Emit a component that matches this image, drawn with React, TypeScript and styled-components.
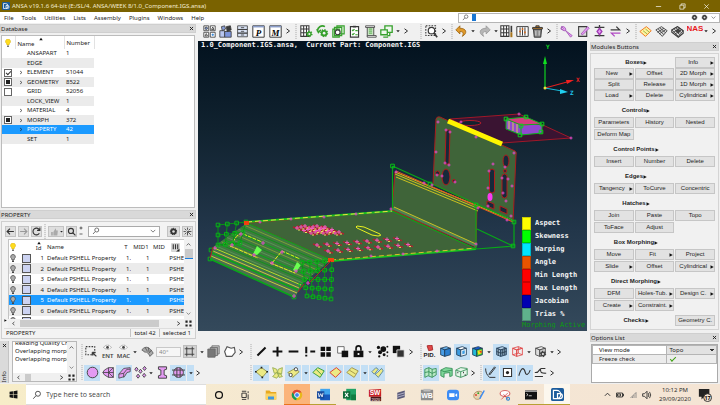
import React from 'react';
import styled, { createGlobalStyle, css } from 'styled-components';

const ui = `"Noto Sans", "Open Sans", sans-serif`;
const arial = `"Liberation Sans", Arial, sans-serif`;
const mono = `"DejaVu Sans Mono", monospace`;

const Global = createGlobalStyle`
  * { box-sizing: border-box; }
  body { margin: 0; background: #f0f0f0; font: 6px/8px ${ui}; color: #222; overflow: hidden; }
  button, input, select { font: inherit; color: inherit; margin: 0; padding: 0; border: 0; background: none; border-radius: 0; }
  svg { display: block; }
`;

/* ---------- layout ---------- */
const Page = styled.div`display: flex; flex-direction: column; height: 100vh;`;
const TitleBar = styled.header`
  display: flex; align-items: center; gap: 2px; height: 12px; flex: none; padding: 0 10px 0 2px;
  background: #7a6200; color: #f3ecd2;
`;
const WindowButtons = styled.div`display: flex; gap: 17px; margin-left: auto;`;
const MenuBar = styled.nav`display: flex; align-items: center; height: 11px; flex: none; background: #fff; padding-left: 4px; gap: 8px;`;
const MenuLink = styled.a`color: #222; text-decoration: none; line-height: 10px;`;
const MenuSearch = styled.label`
  display: flex; align-items: center; gap: 3px; width: 262px; height: 10px; margin-left: auto; padding: 0 3px 0 3px;
  border: 1px solid #b5b5b5; background: #fff;
`;
const MenuInput = styled.input`flex: 1; min-width: 0; height: 7px; border-left: 4px solid #1976d2; outline: none;`;
const Body = styled.div`
  flex: 1; min-height: 0; display: grid;
  grid-template: 'left tools tools' 18px 'left canvas right' 1fr 'bottom bottom right' 44px / 198px 1fr 132px;
`;
const LeftDock = styled.aside`grid-area: left; display: flex; flex-direction: column; padding: 1px 2px 1px 0; gap: 2px; min-height: 0;`;
const RightDock = styled.aside`grid-area: right; display: flex; flex-direction: column; gap: 2px; padding: 1px 1px 1px 2px; min-height: 0;`;
const DockTitle = styled.h2`
  display: flex; justify-content: space-between; align-items: center; margin: 0; padding: 0 2px 0 1px; height: 9px; flex: none;
  font-size: 6px; font-weight: 400; background: #d9d9d9; color: #222; box-shadow: 0 0 0 1px #cfcfcf inset;
`;
const CloseButton = styled.button`width: 5px; height: 5px;`;

/* ---------- toolbars ---------- */
const TopTools = styled.div`grid-area: tools; display: flex; align-items: center; padding: 0 3px 2px 4px; gap: 4px;`;
const ToolGroup = styled.div<{ $w: number; $lead?: number }>`
  display: flex; align-items: center; justify-content: space-between;
  flex: ${p => p.$w} 1 ${p => p.$w}px; min-width: 0; margin-left: ${p => p.$lead ?? 0}px;
`;
const Handle = styled.span`width: 2px; height: 15px; background: repeating-linear-gradient(#cfcfcf 0 1px, #ececec 1px 2px); flex: none;`;
const ToolButton = styled.button<{ $on?: boolean; $grey?: boolean; $narrow?: boolean }>`
  display: grid; place-items: center; flex: none; height: 16px; width: ${p => (p.$narrow ? 6 : 14)}px;
  ${p => p.$on && css`background: #c3dff5; width: ${p.$narrow ? 7 : 16}px;`}
  ${p => p.$grey && css`background: #d2d2d2; height: 13px; border: 1px solid #bdbdbd;`}
`;
const Bottom = styled.section`grid-area: bottom; display: flex; gap: 4px; padding: 1px 0 1px 0;`;
const InfoTab = styled.div`
  display: flex; flex-direction: column; align-items: center; justify-content: space-between; width: 9px; padding: 2px 0 1px;
  background: #dadada; border-right: 1px solid #c4c4c4;
`;
const VerticalText = styled.span`writing-mode: vertical-rl; transform: rotate(180deg);`;
const LogBox = styled.div`
  display: grid; grid-template: 1fr 8px / 1fr 9px; width: 65px; flex: none; margin: 0 0 1px -1px; background: #fff; border: 1px solid #b8b8b8;
`;
const LogLines = styled.div`overflow: hidden; padding-left: 2px; white-space: nowrap; height: 30px; display: flex; flex-direction: column; justify-content: flex-end; padding-bottom: 9px; line-height: 8px;`;
const ToolRows = styled.div`flex: 1; display: grid; grid-template-rows: 1fr 1fr; min-width: 0;`;
const ToolRow = styled.div`display: flex; align-items: center; padding-right: 26px; gap: 6px;`;
const Block = styled.div<{ $w: number }>`flex: ${p => p.$w} 1 ${p => p.$w}px; min-width: 0; display: flex; align-items: center; gap: 1px;`;
const Spin = styled.input`width: 25px; height: 10px; border: 1px solid #c8c8c8; background: #f6f6f6; color: #888; padding-left: 2px;`;
const Stack = styled.span`font-size: 6px; line-height: 6px; font-weight: 600; color: #444; display: grid; justify-items: center;`;

/* ---------- tables ---------- */
const Box = styled.div<{ $grow?: number }>`
  background: #fff; border: 1px solid #bcbcbc; margin: 0 1px; min-height: 0; overflow: hidden; flex: ${p => p.$grow ?? 0} 1 auto;
`;
const DataTable = styled.table`
  border-collapse: collapse; table-layout: fixed; width: 92px;
  th { font-weight: 400; text-align: left; height: 13px; padding: 0 0 0 2px; border-right: 1px solid #e2e2e2; }
  td { padding: 0 0 0 2px; white-space: nowrap; line-height: 9px; }
`;
const SortHead = styled.span`display: grid; line-height: 8px; svg { margin: 0 auto -1px; }`;
const DataRow = styled.tr<{ $on?: boolean }>`
  height: 9px;
  &:nth-child(even) { background: #ebebeb; height: 10px; }
  && { ${p => p.$on && css`background: #1b9aff; color: #fff;`} }
`;
const Tick = styled.input`
  appearance: none; display: block; width: 8px; height: 8px; border: 1px solid #666; background: #fff;
  &:checked::after { content: ''; display: block; width: 4px; height: 2px; margin: 1px; border: solid #333; border-width: 0 0 1px 1px; transform: rotate(-45deg); }
  &:indeterminate { background: #222; box-shadow: 0 0 0 1px #fff inset; }
`;
const NameCell = styled.span`display: flex; align-items: center; gap: 4px; padding-left: 2px; svg { width: 4px; height: 5px; }`;
const Blank = styled.i`width: 4px;`;

const PropPanel = styled.div`
  flex: none; display: flex; flex-direction: column; border: 1px solid #cfcfcf; background: #f3f3f3; margin-left: 1px; padding: 3px 2px 1px;
`;
const PropTools = styled.div`display: flex; align-items: center; gap: 2px; height: 14px; flex: none; padding: 0 0 2px 1px;`;
const SmallButton = styled.button<{ $flat?: boolean; $w?: number }>`
  display: grid; grid-auto-flow: column; place-items: center; width: ${p => p.$w ?? 11}px; height: 11px; flex: none;
  background: ${p => (p.$flat ? 'transparent' : '#dedede')}; border: 1px solid ${p => (p.$flat ? 'transparent' : '#c2c2c2')};
`;
const PlusMinus = styled.span`display: grid; gap: 2px; width: 5px; flex: none;`;
const Combo = styled.label`
  flex: 1 1 0; min-width: 0; display: flex; align-items: center; justify-content: space-between; height: 11px; margin: 0 5px 0 2px; padding: 0 3px;
  background: #fff; border: 1px solid #aaa;
`;
const ComboInput = styled.input`flex: 1 1 0; width: 0; min-width: 0; outline: none;`;
const PropGrid = styled.div`
  display: grid; grid-template: 80px 9px / 4px minmax(0, 1fr) 9px; flex: none; align-items: stretch;
`;
const PropScroll = styled.div`grid-column: 2; overflow: hidden; background: #fff; border: 1px solid #c4c4c4; border-width: 1px 0 0 1px;`;
const PropTable = styled.table`
  border-collapse: collapse; table-layout: fixed; width: 100%;
  th { font-weight: 400; height: 13px; padding: 0; text-align: center; }
  td { padding: 0; white-space: nowrap; overflow: hidden; text-align: right; line-height: 10px; }
  th:nth-child(4), td:nth-child(4) { text-align: left; padding-left: 3px; }
`;
const PropRow = styled(DataRow)`&&, &&:nth-child(even) { height: 10px; } &&:nth-child(even) { height: 11px; }`;
const Swatch = styled.span`display: block; width: 9px; height: 9px; margin-left: 1px; border: 1px solid #555; background: #ccd3f2;`;
const VBar = styled.div`background: #f0f0f0; display: flex; flex-direction: column; align-items: center; justify-content: space-between; padding: 3px 0;`;
const Corner = styled.div`display: grid; place-items: center; background: #f0f0f0;`;
const VThumb = styled.i`width: 8px; height: 10px; background: #c9c9c9; border-bottom: 1px solid #1b7fe0; margin-bottom: auto; margin-top: 2px;`;
const HBar = styled.div`background: #f0f0f0; display: flex; align-items: center; justify-content: space-between; padding: 0 3px; min-width: 0;`;
const HThumb = styled.i<{ $w: number }>`width: ${p => p.$w}%; height: 7px; background: #cbcbcb; margin: 0 auto 0 4px;`;
const StatusBar = styled.div`display: flex; justify-content: flex-end; gap: 3px; line-height: 8px; height: 9px; border-top: 1px solid #ddd; padding: 0 2px;`;
const StatusCell = styled.span<{ $grow?: boolean }>`${p => (p.$grow ? 'flex: 1;' : 'border-left: 1px solid #c4c4c4; padding-left: 3px;')}`;

/* ---------- module buttons ---------- */
const Modules = styled.div`
  flex: 1; min-height: 0; overflow: hidden; display: flex; flex-direction: column; gap: 4px; padding: 3px 3px 0; border: 1px solid #d4d4d4; margin-bottom: 1px;
  background: #f1f1f1; font-family: ${arial};
`;
const ModuleGroup = styled.section<{ $tight?: boolean }>`
  display: grid; grid-template-columns: repeat(3, 1fr); grid-auto-rows: 11px; gap: ${p => (p.$tight ? 0 : 1)}px 1px;
`;
const ModuleTitle = styled.h3<{ $wide?: boolean }>`
  grid-column: 1 / ${p => (p.$wide ? 3 : 4)}; margin: 0; padding-left: 4px; padding-right: ${p => (p.$wide ? 0 : 41)}px;
  display: flex; align-items: center; justify-content: center; font-size: 6px; font-weight: 700; line-height: 11px; white-space: nowrap;
`;
const ModuleButton = styled.button`
  display: flex; align-items: center; justify-content: center; min-width: 0; overflow: hidden; white-space: nowrap; line-height: 9px;
  background: #e2e2e2; border: 1px solid #c6c6c6;
`;
const ModuleLabel = styled.span<{ $arrow?: boolean }>`flex: ${p => (p.$arrow ? '1' : 'none')}; text-align: center;`;

const Options = styled.table`
  border-collapse: collapse; table-layout: fixed; width: 100%; border: 1px solid #aaa;
  th, td { font-weight: 400; text-align: left; border: 1px solid #b5b5b5; height: 9px; padding: 0 0 0 6px; line-height: 8px; }
  td { padding: 0 2px; width: 40%; background: #e2e2e2; }
  tr + tr > * { background: #ececec; }
`;
const OptionsBox = styled.div`flex: none; height: 39px; background: #fff; border: 1px solid #aaa; margin: 0 1px;`;
const OptionSelect = styled.select`width: 100%; height: 8px; appearance: none; display: block; background: linear-gradient(#333, #333) 100% 3px / 4px 1px no-repeat, linear-gradient(#333, #333) calc(100% - 1px) 4px / 2px 1px no-repeat;`;
const GreenTick = styled.input`
  appearance: none; display: block; width: 6px; height: 3px; margin: 0 0 1px 1px;
  &:checked { border: solid #3ca010; border-width: 0 0 1px 1px; transform: rotate(-45deg); }
`;

/* ---------- viewport ---------- */
const Canvas = styled.main`
  grid-area: canvas; position: relative; overflow: hidden; margin: 0 1px 9px 0;
  background: linear-gradient(#03121f, #10222f 30%, #22364a 65%, #34495b);
  color: #f4f4f4; font: 700 7px/9px ${mono};
`;
const Scene = styled.svg`width: 100%; height: 100%;`;
const SceneTitle = styled.h1`position: absolute; left: 3px; top: 0; margin: 0; font: inherit; white-space: pre;`;
const Legend = styled.ul`position: absolute; right: 2px; bottom: 1px; width: 63px; margin: 0; padding: 0; list-style: none;`;
const LegendItem = styled.li<{ $c: string }>`
  display: flex; align-items: center; gap: 4px; height: 13px; white-space: nowrap;
  &::before { content: ''; width: 7px; height: 11px; background: ${p => p.$c}; border: 1px solid #0003; }
`;
const MorphNote = styled.li`color: #0b9a12; font-weight: 400; white-space: nowrap;`;

/* ---------- taskbar ---------- */
const Taskbar = styled.footer`
  display: flex; align-items: stretch; height: 21px; flex: none; font-family: "Open Sans", sans-serif;
  background: linear-gradient(90deg, #f7edc8, #f5e8d4 45%, #f4e4d4);
`;
const Start = styled.button`width: 26px; display: grid; place-items: center;`;
const TaskSearch = styled.label`display: flex; align-items: center; gap: 4px; width: 180px; padding-left: 6px; background: #fff; border: 1px solid #ddd; border-width: 1px 0;`;
const TaskInput = styled.input`flex: 1; font-size: 7px; outline: none; &::placeholder { color: #444; opacity: 1; }`;
const TaskButton = styled.button<{ $bg?: string; $line?: string }>`
  display: grid; place-items: center; width: 26px; flex: 0 1 26px; background: ${p => p.$bg ?? 'transparent'};
  box-shadow: inset 0 -1px ${p => p.$line ?? 'transparent'};
`;
const Tray = styled.div`display: flex; align-items: center; gap: 5px; margin-left: auto; padding-right: 8px;`;
const Clock = styled.time`text-align: center; line-height: 9px; width: 36px; white-space: nowrap;`;

/* ---------- icons ---------- */
const G = '#36a02c', K = '#3a3a3a', P = '#e49af2', Y = '#ecea84';

const cube = (top: string, left: string, right: string, line = '#1d3a55') => (
  <g stroke={line} strokeWidth="1" strokeLinejoin="round">
    <path d="M2 4L9 2l5 2-7 2z" fill={top} /><path d="M2 4l5 2v8l-5-2z" fill={left} /><path d="M7 6l7-2v8l-7 2z" fill={right} />
  </g>
);
const gear = (cx: number, cy: number, r: number, c: string, hole = '#f0f0f0') => (
  <g><circle cx={cx} cy={cy} r={r} fill={c} stroke={c} strokeWidth="2" strokeDasharray="1.6 1.5" /><circle cx={cx} cy={cy} r={r / 2.4} fill={hole} /></g>
);
const plate = (fill: string, line: string) => <path d="M1 8l8-6 6 5-7 7z" fill={fill} stroke={line} strokeWidth="1.2" />;
const meshGrid = (
  <g stroke={K} fill="none"><path d="M1 6l7-4 7 5-6 7z" fill="#ddd" /><path d="M3 9l8-5M5 11l8-5M4 5l7 7M6 3.500l7 6" /></g>
);

const art: Record<string, React.ReactNode> = {
  app: <g><rect width="16" height="16" rx="2" fill="#1c5c9c" /><path d="M3 3h4a5 5 0 010 10H3zM8 13V7h3a3 3 0 010 6z" fill="none" stroke="#fff" strokeWidth="1.500" /></g>,
  close: <path d="M3 3l10 10M13 3L3 13" stroke="#222" strokeWidth="3" />,
  min: <path d="M2 8h12" stroke="#fff" strokeWidth="1.500" />,
  max: <path d="M2 5h9v9H2zM5 5V2h9v9h-3" fill="none" stroke="#fff" strokeWidth="1.500" />,
  shut: <path d="M3 3l10 10M13 3L3 13" stroke="#fff" strokeWidth="1.500" />,
  search: <g fill="none" stroke="#555" strokeWidth="1.600"><circle cx="9.500" cy="6" r="4" /><path d="M6.500 9L2 14" /></g>,
  magnify: <g fill="none" stroke="#333" strokeWidth="2"><circle cx="7" cy="7" r="4.500" /><path d="M10 10l5 5" /></g>,
  chev: <path d="M4 2l8 6-8 6" fill="none" stroke="#222" strokeWidth="2.500" />,
  left: <path d="M11 3L5 8l6 5" fill="none" stroke="#333" strokeWidth="2.500" />,
  down: <path d="M2 5l6 6 6-6" fill="none" stroke="#555" strokeWidth="2" />,
  up: <path d="M2 11l6-6 6 6" fill="none" stroke="#333" strokeWidth="2.200" />,
  caret: <path d="M1 5h14l-7 8z" fill="#222" />,
  tri: <path d="M2 1l13 7-13 7z" fill="#111" />,
  sort: <path d="M1 13h14L8 3z" fill="#111" />,
  bulb: <g><path d="M8 0a5 5 0 00-3 9l1 3h4l1-3a5 5 0 00-3-9z" fill="#ffdc1e" stroke="#d0a800" /><path d="M6 13h4v3H6z" fill="#777" /></g>,
  bulbOff: <g><path d="M8 1a4.500 4.500 0 00-3 8l1 3h4l1-3a4.500 4.500 0 00-3-8z" fill="#aaa" stroke="#444" strokeWidth="1.400" /><path d="M6 13h4v3H6z" fill="#444" /></g>,
  cols: <g><path d="M1 1h14v14H1z" fill="#ddd" stroke="#bbb" /><path d="M4 2v9M8 2v9M12 2v9" stroke="#333" strokeWidth="2" /><path d="M9 15h6v-5z" fill="#222" /></g>,
  parts: <g fill="#fff" stroke={K}><path d="M1 1h6v6H1zM9 1h6v6H9zM1 9h6v6H1zM9 9h6v6H9z" /><circle cx="4" cy="4" r="1.500" fill="#7d9bd8" /><path d="M12 2.500l1.500 3h-3z" /><path d="M2.500 13.500L4 10.500l1.500 3z" /><path d="M12 10.500v3M10.500 12h3" stroke="#1976d2" /></g>,
  shapes: <g stroke={K}><path d="M1 7h6v8H1z" fill="#b8c6f0" /><path d="M3 2l4-1 1 4-4 2z" fill="#8aa0dc" /><path d="M7 8h8v7H7z" fill="#7d95dc" /><path d="M9 2l5-1 1 5-5 2z" fill={K} /></g>,
  cabinet: <g stroke={K} fill="#dbe4f6"><path d="M2 1h12v4.500H2zM2 5.500h12V10H2zM2 10h12v4.500H2z" /><path d="M6 3.300h4M6 7.800h4M6 12.300h4" /></g>,
  pbox: <g><path d="M1 1h14v14H1z" fill="#fff" stroke={K} strokeWidth="1.200" /><path d="M1 2h14" stroke="#8a9cc8" strokeWidth="2" /><text x="8" y="13" textAnchor="middle" fontFamily="Liberation Serif" fontWeight="700" fontStyle="italic" fontSize="11">P</text></g>,
  mbox: <g><path d="M1 1h14v14H1z" fill="#fff" stroke={K} strokeWidth="1.200" /><path d="M1 2h14" stroke="#8a9cc8" strokeWidth="2" /><text x="8" y="13" textAnchor="middle" fontFamily="Liberation Serif" fontWeight="700" fontStyle="italic" fontSize="11">M</text></g>,
  gridGear: <g><path d="M1 1h10v13H1zM4.500 1v13M8 1v13M1 5h10M1 9.500h10" fill="#fff" stroke={K} strokeWidth="1.300" />{gear(11.5, 11, 3, G)}</g>,
  gears: <g>{gear(10, 10, 4, G)}<path d="M2 8a6 6 0 019-6M1 5l2 4 3-3" fill="none" stroke={G} strokeWidth="2" /></g>,
  stack: <g fill="#dff0dc" stroke={G} strokeWidth="1.400"><path d="M6 1h9v10H6zM3 3h9v10H3zM1 5h8v10H1z" /><circle cx="7" cy="9" r="3" stroke={K} fill="#fff" /></g>,
  clip: <g><path d="M3 2h10v13H3z" fill="#fff" stroke={K} strokeWidth="1.400" /><path d="M6 1h4v2H6z" fill={K} /><path d="M5 6l1 1 2-2M5 11l1 1 2-2M9 7h3M9 12h3" stroke={G} fill="none" strokeWidth="1.500" /></g>,
  scroll: <g fill="#cde6c8" stroke={K}><path d="M4 2h8v12H4z" /><path d="M2 1h11v2H2zM4 13h11v2H4z" fill="#fff" /><path d="M6 5h4M6 7.500h4M6 10h4" stroke={G} /></g>,
  screens: <g fill="#eef8ec" stroke={G} strokeWidth="1.600"><path d="M6 1h9v8H6z" /><path d="M1 6h8v6H1z" /><path d="M4 15h6M12 9v4h-3" /></g>,
  zoomBox: <g><path d="M1 1h12v12H1z" fill="none" stroke={K} strokeWidth="1.300" strokeDasharray="2 1.500" /><circle cx="8" cy="7" r="4" fill="#fff" stroke={K} strokeWidth="1.500" /><path d="M11 10l4 5" stroke={K} strokeWidth="2" /></g>,
  undo: <path d="M6 1L1 6l5 5V8c4 0 5 2 3 6 7-4 5-10-3-10z" fill="#e09a2b" stroke="#9c6410" />,
  redo: <path d="M10 1l5 5-5 5V8c-4 0-5 2-3 6-7-4-5-10 3-10z" fill="#b6b6b6" stroke="#999" />,
  table: <g><path d="M1 1h10v13H1zM4.500 1v13M8 1v13M1 5h10M1 9.500h10" fill="#fff" stroke={K} strokeWidth="1.300" /><path d="M14 1v8" stroke={K} strokeWidth="2" /><path d="M14 9v6" stroke="#a8741b" strokeWidth="2.500" /></g>,
  sliders: <g fill="none" stroke={K} strokeWidth="1.200"><path d="M1 2h14v12H1z" fill="#fff" /><path d="M5 3v10M8 3v10M11 3v10" /><path d="M4 8h2M7 5h2M10 9h2" stroke="#d86a1c" strokeWidth="2" /></g>,
  trash: <g fill="#8a8a8a" stroke={K} strokeWidth="1.200"><path d="M3 5h10l-1 10H4z" /><path d="M2 3h12v2H2zM6 1h4v2H6z" fill="#d88b26" /><path d="M6 7v6M10 7v6" stroke="#ddd" /></g>,
  wrench: <path d="M2 2a4 4 0 005 5l6 8 2-2-8-6a4 4 0 00-5-5l2 2-1 2-2-1z" fill={P} stroke="#a058b4" />,
  note: <g><path d="M2 2h10v12H2z" fill="#ddd" stroke={K} strokeWidth="1.300" /><path d="M5 11l8-9 2 2-8 8z" fill={P} stroke="#a058b4" /></g>,
  pins: <g stroke="#a13cb4" strokeWidth="1.600"><path d="M8 0v14M2 3h12M2 13h12" stroke={K} /><path d="M5 8l3-4 3 4-3 4z" fill={P} /></g>,
  swap: <g fill="none" stroke={K} strokeWidth="1.600"><path d="M2 6h11l-4-4" /><path d="M14 10H3l4 4" stroke="#b04ac4" /></g>,
  plateY: <g>{plate('#fff3a0', '#f07820')}<path d="M5 7l5 4M8 5l5 4" stroke="#8aa838" /></g>,
  mesh: meshGrid,
  mesh2: <g>{meshGrid}<path d="M1 6l7-4 7 5v3l-6 5-8-6z" fill="none" stroke={K} strokeWidth="1.400" /><path d="M5 7l4-3 3 3-3 4z" fill="#444" /></g>,
  nas: <text x="8" y="8" textAnchor="middle" fontFamily="Liberation Sans" fontWeight="700" fontSize="8" fill="#e8191b">NAS</text>,
  select: <g><path d="M1 2h11v10H1z" fill="none" stroke={K} strokeWidth="1.300" strokeDasharray="2 1.500" /><path d="M9 9l5 5M9 9v4M9 9h4" stroke={K} strokeWidth="1.500" /></g>,
  fan: <path d="M1 6c5-6 10-3 14 4l-4 4c-2-4-4-6-6-5z M5 3l3 5M9 3l1 6M13 6l-3 4" fill="#aaa" stroke="#555" />,
  frame: <g fill="none" stroke={K} strokeWidth="1.300"><path d="M4 1v14M12 1v14M1 4h14M1 12h14" /></g>,
  boxes: <g stroke="#666"><path d="M6 1h9v10H6z" fill="#ccc" /><path d="M4 3h9v10H4z" fill="#aaa" /><path d="M1 5h9v10H1z" fill="#777" /></g>,
  poly: <path d="M2 8l3-6 5 2 4-1 1 6-4 5H4z" fill="#fff" stroke="#555" strokeWidth="1.400" />,
  line: <path d="M3 13L13 3" stroke="#111" strokeWidth="2.500" />,
  plus: <path d="M8 2v12M2 8h12" stroke="#111" strokeWidth="2.500" />,
  minus: <path d="M2 8h12" stroke="#111" strokeWidth="2.500" />,
  bang: <path d="M4 2v8M4 12v2M9 8h6" stroke="#111" strokeWidth="2.500" />,
  tiles: <path d="M2 2h5.500v5.500H2zM9 2h5.500v5.500H9zM2 9h5.500v5.500H2zM9 9h5.500v5.500H9z" fill="#111" />,
  dup: <g><path d="M2 2h8v8H2z" fill="#fff" stroke="#555" /><path d="M7 7h8v8H7z" fill="#111" /></g>,
  dup2: <g><path d="M1 1h9v9H1z" fill="#111" /><path d="M6 6h9v9H6z" fill="#333" stroke="#eee" /></g>,
  lock: <g><path d="M2 7h12v8H2z" fill="#111" /><path d="M5 7V4a3 3 0 016 0v3" fill="none" stroke="#111" strokeWidth="2" /><circle cx="8" cy="11" r="1.300" fill="#fff" /></g>,
  scatter: <g fill="#111"><circle cx="3" cy="3" r="2" /><circle cx="9" cy="5" r="3.500" /><circle cx="5" cy="9" r="2.500" /><circle cx="14" cy="2" r="1.200" /><circle cx="14" cy="9" r="1.200" /><circle cx="10" cy="12" r="1.800" /><circle cx="4" cy="14" r="1.400" /><circle cx="14" cy="13.500" r="1" /></g>,
  pid: <g><path d="M5 1l6-1 1 6-5 1z" fill="#e04848" stroke="#a02020" /><text x="8" y="15" textAnchor="middle" fontFamily="Liberation Sans" fontWeight="700" fontSize="7.500" fill="#222">PID.</text></g>,
  cubeBlue: cube('#6db5f0', '#4a9ee6', '#2c80d0'),
  cubeHole: <g>{cube('#fff', '#3c9be0', '#e8f4fc')}<path d="M9 7.500l3-1v4l-3 1z" fill="#3c9be0" /></g>,
  cubeHeat: <g>{cube('#1860d0', '#24b8d8', '#3cc840')}<path d="M8 7l5-1v4l-4 2z" fill="#f5e11c" /><path d="M10 8l3-1v3z" fill="#e83020" /></g>,
  cubeMesh: <g>{cube('#b9d2e6', '#9cb8cc', '#86a4ba')}<path d="M4 5v8M2 8l5 2 7-2M9.500 5.500v7.500M12 4.500v8" fill="none" stroke="#24384a" /></g>,
  cubeRed: <g>{cube('none', 'none', 'none', '#e04444')}<path d="M9 2v8l5 2M9 10l-7 2" stroke="#e04444" fill="none" /></g>,
  cubeGear: <g>{cube('#eee', '#ddd', '#ccc', '#444')}{gear(11, 11, 3, '#444')}</g>,
  circle: <circle cx="8" cy="8" r="6.500" fill={P} stroke="#444" strokeWidth="1.200" />,
  ball: <g fill={P} stroke="#444"><path d="M3 5l5-3h6v12H8L3 11l-2-3z" /><path d="M8 2v12M1 8h13M8 8l6-6M8 8l6 6" /></g>,
  bar: <g fill={P} stroke="#444"><path d="M1 10l6-7 8-1v5l-4 1-3 5-7 2z" /><path d="M1 10l6-1 4-5h4M7 9v5" /></g>,
  gems: <g fill={P} stroke="#333"><path d="M3 1.500l2 2.500-2 2.500L1 4zM13 0.500l2 2.500-2 2.500L11 3zM8 4l2 2.500L8 9 6 6.500zM5 10l2 2.500L5 15l-2-2.500zM12.500 9l2 2.500-2 2.500-2-2.500z" /></g>,
  beam: <path d="M3 1h10v3l-3 1v6l3 1v3H3v-3l3-1V5L3 4z" fill={P} stroke="#444" strokeWidth="1.200" />,
  disc: <g fill={P} stroke="#444" strokeWidth="1.200"><circle cx="8" cy="8" r="6" /><path d="M0 5h16M0 11h16M6 2v12M10 2v12" fill="none" /></g>,
  quad: <g><path d="M1 7l7-5 7 5-6 7z" fill={Y} stroke="#8a8a3c" /><path d="M0 6h2v2H0zM7 1h2v2H7zM14 6h2v2h-2zM8 13h2v2H8z" fill="#222" /></g>,
  cross: <g fill={Y} stroke="#8fa84a"><path d="M2 2l5 2 1 4-4 1zM14 2L9 4 8 8l5 2zM2 13l5-5 3 3-3 4zM14 13l-2-3-4-1 2 5z" /></g>,
  faces: <g fill={Y} stroke="#8a8a3c"><path d="M1 8l9-5 5 4-8 7z" /><circle cx="4.500" cy="11" r="2" fill="#fff" stroke="#333" /><circle cx="11" cy="4" r="2" fill="#fff" stroke="#333" /></g>,
  quadG: <g fill={Y} stroke="#3ca040" strokeWidth="1.200"><path d="M1 8l6-6 8 4-5 8z" /><path d="M5 4l7 7" /></g>,
  quadR: plate(Y, '#e04030'),
  quadY: <g fill={Y} stroke="#9a8a3c"><path d="M1 8l6-6 8 4-5 8z" /><path d="M4 5l8 5" /></g>,
  quadB: <g fill={Y} stroke="#4a7a9c"><path d="M1 7l5-5 3 2-5 6zM8 8l5-5 2 3-6 8-4-4z" /></g>,
  meshG: <g fill="#b8e8c4" stroke="#2c8a50"><path d="M1 4l5-2 4 2 5-1v8l-5 3-5-2-4 2z" /><path d="M1 8l5-1 4 2 5-2M6 2v10M10 4v10" /></g>,
  solidG: <g fill="#7fd69a" stroke="#2c8a50"><path d="M1 5l6-3 8 1v9l-3 1V8L5 9v5l-4-2z" /><path d="M1 5l4 2 10-2" /></g>,
  dotG: <g fill="#e6f6ea" stroke="#2c8a50"><path d="M1 5l6-3 8 1v8l-8 3-6-2z" /><path d="M1 5l6 2 8-3M7 7v7" /><path d="M3 8h1M10 8h1M12 11h1" stroke="#222" strokeWidth="2" /></g>,
  pen: <path d="M2 3c0 4 1 8 5 11h7M6 10l7-9 1 1-7 9z" fill="none" stroke="#333" strokeWidth="1.200" />,
  dotBox: <g><path d="M3 3h10v10H3z" fill="#fff" stroke="#333" strokeWidth="1.300" /><circle cx="8" cy="8" r="2" fill="#222" /></g>,
  wave: <path d="M1 12c4-14 7-8 8-4s4 3 6-3" fill="none" stroke="#333" strokeWidth="1.300" />,
  curve: <path d="M1 13h10M1 8c6 1 5-5 8-5h5M8 3c0 5 0 6 7 6" fill="none" stroke="#333" strokeWidth="1.300" />,
  back: <path d="M14 8H3M7 3L2 8l5 5" fill="none" stroke="#333" strokeWidth="2" />,
  fwd: <path d="M2 8h11M9 3l5 5-5 5" fill="none" stroke="#999" strokeWidth="2" />,
  reload: <path d="M13 5a6 6 0 100 6M14 1v5H9" fill="none" stroke="#333" strokeWidth="2" />,
  thumb: <path d="M2 9h3v6H2zM6 9l4-7 1 4h3l-1 9H6z" fill="#aaa" />,
  cog: gear(8, 8, 5.5, '#333', '#dedede'),
  spark: <path d="M8 1v4M8 11v4M1 8h4M11 8h4M3 3l3 3M13 3l-3 3M3 13l3-3M8 8l6 6M8 8v5M8 8h5" stroke="#444" strokeWidth="1.500" />,
  expand: <path d="M1 1h5v5H1zM10 1h5v5h-5zM1 10h5v5H1zM10 10h5v5h-5z" fill="#222" />,
  eye: <g><path d="M1 6q7-8 14 0q-7 7-14 0z" fill="#fff" stroke="#555" strokeDasharray="2 1" /><circle cx="8" cy="6" r="2.500" fill="#444" /></g>,
  windows: <path d="M1 3l6-1v5.500H1zM8 2l7-1v6.500H8zM1 8.500h6V14l-6-1zM8 8.500h7V15l-7-1z" fill="#111" />,
  ring: <circle cx="8" cy="8" r="5.500" fill="none" stroke="#111" strokeWidth="2" />,
  taskview: <path d="M3 5h7v7H3zM3 2h7M3 15h7M13 2v3M13 7v8" fill="none" stroke="#333" strokeWidth="1.500" />,
  folder: <g><path d="M1 2h5l2 2h7v10H1z" fill="#e8a920" /><path d="M1 6h14v8H1z" fill="#fbd465" /><path d="M4 10h8v4H4z" fill="#3f97e0" /></g>,
  chrome: <g><circle cx="8" cy="8" r="7" fill="#e8b91a" /><path d="M8 8L2 4.500A7 7 0 007 15z" fill="#159a55" /><path d="M2 4.300A7 7 0 0114.200 4.800H8L5 9z" fill="#db4437" /><circle cx="8" cy="8" r="3.200" fill="#4285f4" stroke="#fff" strokeWidth="1.200" /></g>,
  word: <g><path d="M4 1h12v14H4z" fill="#41a5ee" /><path d="M4 8h12v7H4z" fill="#185abd" /><path d="M0 4h9v9H0z" fill="#174a9c" /><path d="M1.500 6l1.200 5 1.800-4 1.800 4 1.200-5" stroke="#fff" fill="none" /></g>,
  excel: <g><path d="M4 1h12v14H4z" fill="#21a366" /><path d="M10 8h6v7h-6z" fill="#107c41" /><path d="M0 4h9v9H0z" fill="#0f6a38" /><path d="M2.500 6l4 5M6.500 6l-4 5" stroke="#fff" strokeWidth="1.300" /></g>,
  solid: <g><path d="M1 2l14-1v9H1z" fill="#c81e24" /><path d="M3 10h12v5H3z" fill="#4a1518" /><text x="8" y="8.500" textAnchor="middle" fontFamily="Liberation Sans" fontWeight="700" fontSize="7.500" fill="#fff">SW</text><text x="9" y="14.300" textAnchor="middle" fontFamily="Liberation Sans" fontSize="4.500" fill="#fff">2020</text></g>,
  blade: <g fill="#5a5a78"><path d="M3 5l10-3v9L3 14z" /><path d="M3 8l10-3M3 11l10-3" stroke="#c8c8dc" /></g>,
  wb: <g><path d="M1 2h14v12H1z" fill="#8d8d8d" /><path d="M4 1h8v3H4z" fill="#bbb" /><text x="8" y="11.500" textAnchor="middle" fontFamily="Liberation Sans" fontWeight="700" fontSize="8" fill="#fff">WB</text></g>,
  zoom: <g><rect x="0" y="1" width="16" height="14" rx="4" fill="#3c8cf5" /><path d="M3 5.500h7v5H3zM11 7.500l2.500-2v5L11 8.700z" fill="#fff" /></g>,
  paint: <g><path d="M1 9a7 6 0 017-6c5 0 6 3 3 5-2 1 0 3-2 5-4 2-8 0-8-4z" fill="#e8d4b0" stroke="#a08050" /><circle cx="4" cy="8" r="1.300" fill="#e04030" /><circle cx="7" cy="5.500" r="1.300" fill="#36a02c" /><path d="M15 2l-6 11" stroke="#3c8cf5" strokeWidth="2" /></g>,
  snip: <g><ellipse cx="8" cy="6" rx="6.500" ry="4" fill="#fff" stroke="#d86a6a" strokeWidth="1.500" /><path d="M3 14l9-9M6 7l6 7" stroke="#d04040" /><circle cx="12" cy="13" r="2" fill="none" stroke="#2c88d8" strokeWidth="1.500" /></g>,
  cmd: <g><path d="M0 2h16v12H0z" fill="#111" /><path d="M0 2h16v2H0z" fill="#999" /><path d="M2 6l2 1.500L2 9M5 9h4" stroke="#fff" fill="none" /></g>,
  battery: <path d="M1 4h12v8H1zM13 6h2v4h-2M3 6h6v4H3z" fill="none" stroke="#222" strokeWidth="1.600" />,
  wifi: <path d="M3 14L14 3v11M7 14v-3M10 14V8" fill="none" stroke="#777" strokeWidth="1.500" />,
  sound: <path d="M1 6h3l4-4v12l-4-4H1zM10 5q2 3 0 6M12 3q4 5 0 10" fill="none" stroke="#222" strokeWidth="1.300" />,
  notice: <g><path d="M1 1h12v9H7l-3 3v-3H1z" fill="#222" /><circle cx="11" cy="11" r="4.500" fill="#f4e4d4" stroke="#222" /><text x="11" y="13.500" textAnchor="middle" fontFamily="Open Sans" fontSize="6" fontWeight="700">17</text></g>,
};

const Icon = ({ n, s = 13 }: { n: string; s?: number }) => (
  <svg width={s} height={s} viewBox="0 0 16 16" aria-hidden="true">{art[n]}</svg>
);

/** Tool names: "+" marks an active tool, "v" a drop-down caret, ">" the overflow chevron. */
const Tools = ({ list }: { list: string }) => (
  <>
    {list.split(' ').map((raw, i) => {
      const on = raw.startsWith('+');
      const n = on ? raw.slice(1) : raw;
      if (n === '|') return <Handle key={i} />;
      if (n === 'v') return <ToolButton key={i} $narrow $on={on} aria-label="More"><Icon n="caret" s={4} /></ToolButton>;
      if (n === '>') return <ToolButton key={i} $narrow aria-label="Expand"><Icon n="chev" s={6} /></ToolButton>;
      if (n === 'ENT' || n === 'MAC') return <ToolButton key={i}><Stack><Icon n="eye" s={9} />{n}</Stack></ToolButton>;
      if (n === '40') return <Spin key={i} aria-label="Angle" defaultValue="40°" />;
      return <ToolButton key={i} $on={on} $grey={n === 'frame'} aria-label={n}><Icon n={n} s={n === 'nas' ? 16 : n === 'frame' ? 11 : 13} /></ToolButton>;
    })}
  </>
);

/* ---------- data ---------- */
const database: [string, string, string, boolean][] = [
  ['ANSAPART', '1', '', false], ['EDGE', '', '', false], ['ELEMENT', '51044', 'on', true], ['GEOMETRY', '8522', 'mix', true],
  ['GRID', '52056', 'off', false], ['LOCK_VIEW', '1', '', false], ['MATERIAL', '4', '', true], ['MORPH', '372', 'mix', true],
  ['PROPERTY', '42', '', true], ['SET', '1', '', false],
];
const modules: [string, string[]][] = [
  ['Boxes', ['Info>', 'New>', 'Offset', '2D Morph>', 'Split', 'Release', '1D Morph>', 'Load>', 'Delete', 'Cylindrical>']],
  ['Controls', ['Parameters', 'History', 'Nested', 'Deform Map']],
  ['Control Points', ['Insert', 'Number', 'Delete']],
  ['Edges', ['Tangency>', 'ToCurve', 'Concentric']],
  ['Hatches', ['Join', 'Paste', 'Topo', 'ToFace', 'Adjust']],
  ['Box Morphing', ['Move', 'Fit>', 'Project', 'Slide>', 'Offset', 'Cylindrical>']],
  ['Direct Morphing', ['DFM', 'Holes-Tub.>', 'Design C.>', 'Create>', 'Constraint.>']],
  ['Checks', ['Geometry C.']],
];
const legend = [
  ['Aspect', '#ffff00'], ['Skewness', '#00ff00'], ['Warping', '#00e5ff'], ['Angle', '#e85400'],
  ['Min Length', '#ff0000'], ['Max Length', '#ff0000'], ['Jacobian', '#0000b0'], ['Trias %', '#5fb28c'],
];

/* ---------- model drawing ---------- */
type Pt = [number, number];
const mix = (a: Pt, b: Pt, t: number): Pt => [a[0] + (b[0] - a[0]) * t, a[1] + (b[1] - a[1]) * t];
const marks = (pts: Pt[], r = 1.5) => pts.map(([x, y]) => `M${x - r} ${y}h${2 * r}M${x} ${y - r}v${2 * r}`).join('');
const squares = (pts: Pt[], r = 1.8) => pts.map(([x, y]) => `M${x - r} ${y - r}h${2 * r}v${2 * r}h${-2 * r}z`).join('');
const lattice = (a: Pt, b: Pt, c: Pt, d: Pt, nu: number, nv: number): Pt[] =>
  Array.from({ length: (nu + 1) * (nv + 1) }, (_, i) => {
    const u = (i % (nu + 1)) / nu, v = Math.floor(i / (nu + 1)) / nv;
    return mix(mix(a, b, u), mix(d, c, u), v);
  });
const wires = (a: Pt, b: Pt, c: Pt, d: Pt, nu: number, nv: number) => {
  const out: string[] = [];
  for (let i = 0; i <= nu; i++) out.push(`M${mix(a, b, i / nu)}L${mix(d, c, i / nu)}`);
  for (let j = 0; j <= nv; j++) out.push(`M${mix(a, d, j / nv)}L${mix(b, c, j / nv)}`);
  return out.join('');
};

const latticeL: [Pt, Pt, Pt, Pt] = [[218, 225], [246, 222], [240, 243], [218, 245]];
const latticeR: [Pt, Pt, Pt, Pt] = [[302, 263], [332, 260], [331, 299], [307, 296]];
const stitches: Pt[] = [];
for (let r = 0; r < 3; r++) for (let i = 0; i < 8; i++) stitches.push([297 + i * 4 + r * 7, 228 + r * 2.5 - (i % 3)]);
for (let r = 0; r < 2; r++) for (let i = 0; i < 9; i++) stitches.push([317 + i * 10 + r * 11, 245 + r * 6 - i * 0.8]);

const Model = () => (
  <Scene viewBox="198 41 389 290" preserveAspectRatio="xMidYMid slice" aria-label="3D model">
    <g strokeWidth="1" fill="none" strokeLinejoin="round">
      {/* connector plate */}
      <polygon points="450,119 519,114 571,138 502,143" fill="#3a1432" stroke="#a01828" />
      <ellipse cx="470" cy="123" rx="11" ry="2.500" fill="#12222f" stroke="#b01c2c" />
      <path d="M506 119l15 6h21v8l-21 2-15-6z" fill="#9248d0" />
      <path d="M506 119l20-2 16 7-21 2z" fill="#d83a80" />
      <path d="M509 121v8M513 122v9M517 124v9" stroke="#d8cf50" />
      <path d="M506 119v10M521 125v10M542 124v9M506 119l15 6 21-1M506 129l15 6 21-2M506 119l20-2 16 7" stroke="#0bb01c" />
      <path d={squares([[506, 119], [526, 117], [542, 124], [521, 126], [520, 135], [541, 132]])} stroke="#0bd01c" />
      {/* upright plate */}
      <path d="M440 117L515 151q2 1 1 4L513 222 433 184 436 119q1-3 4-2z" fill="#3f6439" stroke="#a81c1c" />
      <g fill="#17293a" stroke="#b01c1c">
        <path d="M446 130h4l-1 34h-4z" /><ellipse cx="446" cy="177" rx="4" ry="8" /><ellipse cx="506" cy="161" rx="3" ry="6" />
        <rect x="489.500" y="169" width="5" height="24" rx="2.500" /><rect x="502" y="174" width="5" height="24" rx="2.500" />
        <path d="M487 201l7 3v5l-7-3zM500 206l7 3v5l-7-3z" /><circle cx="437.500" cy="173" r="2" /><circle cx="454" cy="181" r="1.500" /><circle cx="505" cy="171" r="1.500" />
      </g>
      <ellipse cx="490" cy="197" rx="2.500" ry="4" fill="#f83cf0" />
      <path d="M448 121L502 144" stroke="#fff600" strokeWidth="5" />
      <path d={marks([[438, 122], [436, 152], [461, 122], [476, 137], [519, 114], [571, 138], [514, 153], [512, 186], [511, 216], [437, 175], [442, 176], [455, 182], [446, 130], [450, 132], [445, 163], [449, 165], [493, 164], [489, 171], [488, 188], [502, 178], [508, 179], [503, 193], [506, 201], [505, 167], [488, 206]])} stroke="#e04ac8" />
      {/* deck */}
      <polygon points="247,223 393,211 476,249 331,260" fill="#3f6439" stroke="#a82020" />
      <path d="M247 222L393 211" stroke="#18c020" strokeWidth="2" /><path d="M247 222L393 211" stroke="#e8e040" strokeDasharray="5 3" />
      <path d="M331 261L476 249" stroke="#18c020" strokeWidth="2" /><path d="M331 260L476 248" stroke="#d8c030" strokeDasharray="5 3" />
      <path d="M357 226l7 1 16 7q2 2-2 2l-6-1-15-7q-2-1 0-2z" stroke="#e8f020" />
      <path d={marks([[260, 222], [291, 219], [324, 217], [356, 214], [437, 251], [403, 254], [371, 256]])} stroke="#e04ac8" />
      <path d={stitches.map(([x, y]) => `M${x - 4} ${y - 1}l9 3`).join('')} stroke="#b02030" strokeWidth="1.500" />
      <path d={marks(stitches, 2)} stroke="#f060c0" />
      <path d={stitches.map(([x, y]) => `M${x + 1} ${y + 2}h2`).join('')} stroke="#e8e060" />
      {/* rear flange */}
      <polygon points="395,172 477,206 476,247 392,210" fill="#3f6439" stroke="#b02020" />
      <path d="M393 208L477 246" stroke="#4f7f55" strokeWidth="3" />
      <path d="M395 174L477 208M396 177L478 211M395 172L512 220M394 207L476 244" stroke="#c8c020" />
      <path d="M396 171L513 222" stroke="#e05a20" />
      <path d="M392.500 166L514 221V246L476 249V205M392.500 166V210M392 211L476 249M477 229L513 246" stroke="#08a818" strokeWidth="1.200" />
      <path d={squares([[392.5, 166], [514, 222], [513, 246], [476, 205], [430, 184]])} stroke="#08c018" />
      <path d={marks([[396, 172], [391, 209], [424, 183], [432, 185], [478, 208], [507, 220], [476, 244]])} stroke="#e04ac8" />
      {/* front flange */}
      <polygon points="247,223 331,260 303,283 295,297 210,259 213,247" fill="#3f7a3f" />
      <polygon points="213,248 302,284 295,297 210,259" fill="#4c6f50" />
      {Array.from({ length: 13 }, (_, i) => (
        <path key={i} d={`M${mix([247, 223], [213, 248], i / 12)}L${mix([331, 260], [300, 285], i / 12)}`} stroke={['#08a818', '#7f9a3a', '#14901c', '#5b9058'][i % 4]} />
      ))}
      <path d="M214 248L301 285M213 251L299 288M211 256L297 293" stroke="#c8c83c" />
      <path d="M210 259L294 297M212 253L298 290" stroke="#08a818" strokeWidth="1.500" />
      <path d="M231 247q3-10 10-14l21 9M272 263l10-12 18 8M230 246l28 12M270 263l25 10" stroke="#e8f020" strokeDasharray="4 1" />
      <path d="M257 246l5 4-5 5-4-1zM297 262l4 3-5 7-3-2z" fill="#6cff50" />
      <path d={wires(...latticeL, 3, 2) + wires(...latticeR, 4, 4)} stroke="#089414" />
      <path d={squares([...lattice(...latticeL, 3, 2), ...lattice(...latticeR, 4, 4), [211, 250], [210, 259], [294, 297], [301, 285]])} stroke="#08b418" />
      <path d={marks([[241, 234], [232, 245], [263, 243], [254, 255], [272, 263], [282, 252], [296, 271], [215, 248], [308, 283], [294, 296]], 2)} stroke="#e04ac8" />
      <path d="M244 221h5v4h-5zM328 258h6v4h-6z" fill="#f04010" />
      <path d="M331 261L309 283M304 284L298 292M213 247L210 258" stroke="#b02020" />
    </g>
    {/* axis triad */}
    <g strokeWidth="1.200" fill="none">
      <path d="M545 88V62" stroke="#10d020" /><path d="M543 64l2-8 2 8z" fill="#10e020" />
      <path d="M545 88l22-6" stroke="#e02020" /><path d="M566 80l8 0-7 4z" fill="#f02020" />
      <path d="M545 88l17 3" stroke="#18b8d8" /><path d="M560 89l8 3-8 2z" fill="#20d0f0" />
      <circle cx="545" cy="88" r="1.500" fill="#e8e040" />
    </g>
    <g fontSize="6" fontFamily="DejaVu Sans Mono" fontWeight="700">
      <text x="546" y="49" fill="#10e020">Y</text><text x="576" y="82" fill="#f02020">X</text><text x="570" y="95" fill="#20c8f0">Z</text>
    </g>
  </Scene>
);

const DockHeader = ({ children }: { children: React.ReactNode }) => (
  <DockTitle>{children}<CloseButton aria-label="Close"><Icon n="close" s={5} /></CloseButton></DockTitle>
);

const Database = () => (
  <>
    <DockHeader>Database</DockHeader>
    <Box $grow={1}>
      <DataTable>
        <colgroup><col width="13" /><col width="49" /><col width="30" /></colgroup>
        <thead><tr><th><Icon n="bulb" s={8} /></th><th><SortHead><Icon n="sort" s={4} />Name</SortHead></th><th>Number</th></tr></thead>
        <tbody>
          {database.map(([name, count, state, open]) => (
            <DataRow key={name} $on={name === 'PROPERTY'}>
              <td>{state && <Tick type="checkbox" aria-label={name} defaultChecked={state === 'on'} ref={el => { if (el) el.indeterminate = state === 'mix'; }} />}</td>
              <td><NameCell>{open ? <Icon n="chev" s={4} /> : <Blank />}{name}</NameCell></td>
              <td>{count}</td>
            </DataRow>
          ))}
        </tbody>
      </DataTable>
    </Box>
  </>
);

const Properties = () => (
  <>
    <DockHeader>PROPERTY</DockHeader>
    <PropPanel>
      <PropTools>
        <SmallButton aria-label="Back"><Icon n="back" s={9} /></SmallButton>
        <SmallButton aria-label="Forward"><Icon n="fwd" s={9} /></SmallButton>
        <SmallButton aria-label="Reload"><Icon n="reload" s={9} /></SmallButton>
        <Handle />
        <SmallButton aria-label="Mark" $w={16}><Icon n="thumb" s={9} /><Icon n="caret" s={3} /></SmallButton>
        <SmallButton aria-label="Find"><Icon n="magnify" s={9} /></SmallButton>
        <PlusMinus><Icon n="plus" s={4} /><Icon n="minus" s={4} /></PlusMinus>
        <Combo><Icon n="search" s={8} /><ComboInput aria-label="Filter" /><Icon n="down" s={6} /></Combo>
        <SmallButton aria-label="Settings" $w={13}><Icon n="cog" s={9} /></SmallButton>
        <SmallButton aria-label="Pick"><Icon n="spark" s={9} /></SmallButton>
      </PropTools>
      <PropGrid>
        <PropScroll>
          <PropTable>
            <colgroup><col width="12" /><col width="12" /><col width="11" /><col width="77" /><col width="10" /><col width="20" /><col width="16" /><col /></colgroup>
            <thead>
              <tr>
                <th><Icon n="bulb" s={8} /></th><th /><th><SortHead><Icon n="sort" s={4} />Id</SortHead></th>
                <th>Name</th><th>T</th><th>MID1</th><th>MID</th><th><SortHead><Icon n="cols" s={9} /></SortHead></th>
              </tr>
            </thead>
            <tbody>
              {[1, 2, 3, 4, 5, 6, 7].map(id => (
                <PropRow key={id} $on={id === 5}>
                  <td><Icon n="bulbOff" s={8} /></td><td><Swatch /></td><td>{id}</td><td>Default PSHELL Property</td>
                  <td>1.</td><td>1&nbsp;</td><td /><td>PSHE</td>
                </PropRow>
              ))}
            </tbody>
          </PropTable>
        </PropScroll>
        <VBar><Icon n="up" s={5} /><VThumb /><Icon n="down" s={5} /></VBar>
        <Icon n="tri" s={3} />
        <HBar><Icon n="left" s={5} /><HThumb $w={82} /><Icon n="chev" s={5} /></HBar>
        <Corner><Icon n="expand" s={7} /></Corner>
      </PropGrid>
      <StatusBar><StatusCell $grow>PROPERTY</StatusCell><StatusCell>total 42</StatusCell><StatusCell>selected 1</StatusCell></StatusBar>
    </PropPanel>
  </>
);

const ModulePanel = () => (
  <Modules>
    {modules.map(([title, items]) => (
      <ModuleGroup key={title} $tight={title === 'Boxes'}>
        <ModuleTitle $wide={title === 'Boxes' || title === 'Checks'}>{title}<Icon n="tri" s={4} /></ModuleTitle>
        {items.map(item => {
          const arrow = item.endsWith('>');
          return (
            <ModuleButton key={item}>
              <ModuleLabel $arrow={arrow}>{arrow ? item.slice(0, -1) : item}</ModuleLabel>{arrow && <Icon n="tri" s={4} />}
            </ModuleButton>
          );
        })}
      </ModuleGroup>
    ))}
  </Modules>
);

export default function App() {
  return (
    <Page>
      <Global />
      <TitleBar>
        <Icon n="app" s={8} />
        <span>ANSA v19.1.6 64-bit (E:/SL/4. ANSA/WEEK 8/1.0_Component.IGS.ansa)</span>
        <WindowButtons>
          {['min', 'max', 'shut'].map(n => <button key={n} aria-label={n}><Icon n={n} s={7} /></button>)}
        </WindowButtons>
      </TitleBar>
      <MenuBar>
        {['File', 'Tools', 'Utilities', 'Lists', 'Assembly', 'Plugins', 'Windows', 'Help'].map(m => <MenuLink key={m} href="#">{m}</MenuLink>)}
        <MenuSearch>
          <Icon n="search" s={7} /><MenuInput aria-label="Search" />
          <Icon n="cog" s={7} /><Icon n="cog" s={7} /><Icon n="down" s={5} />
        </MenuSearch>
      </MenuBar>
      <Body>
        <LeftDock><Database /><Properties /></LeftDock>
        <TopTools>
          <ToolGroup $w={89}><Tools list="parts shapes cabinet pbox mbox >" /></ToolGroup>
          <ToolGroup $w={114}><Tools list="| gridGear gears stack clip scroll screens v >" /></ToolGroup>
          <ToolGroup $w={27} $lead={7}><Tools list="| zoomBox >" /></ToolGroup>
          <ToolGroup $w={100}><Tools list="| undo v redo v table sliders trash >" /></ToolGroup>
          <ToolGroup $w={75}><Tools list="| wrench note pins swap >" /></ToolGroup>
          <ToolGroup $w={82}><Tools list="| plateY mesh mesh2 nas v >" /></ToolGroup>
        </TopTools>
        <Canvas>
          <Model />
          <SceneTitle>{'1.0_Component.IGS.ansa,  Current Part: Component.IGS'}</SceneTitle>
          <Legend>
            {legend.map(([name, c]) => <LegendItem key={name} $c={c}>{name}</LegendItem>)}
            <MorphNote>Morphing Active</MorphNote>
          </Legend>
        </Canvas>
        <RightDock>
          <DockHeader>Modules Buttons</DockHeader>
          <ModulePanel />
          <DockHeader>Options List</DockHeader>
          <OptionsBox>
            <Options>
              <tbody>
                <tr><th scope="row"><label htmlFor="view">View mode</label></th><td><OptionSelect id="view"><option>Topo</option></OptionSelect></td></tr>
                <tr><th scope="row"><label htmlFor="freeze">Freeze check</label></th><td><GreenTick id="freeze" type="checkbox" defaultChecked /></td></tr>
              </tbody>
            </Options>
          </OptionsBox>
        </RightDock>
        <Bottom>
          <InfoTab><CloseButton aria-label="Close"><Icon n="close" s={5} /></CloseButton><VerticalText>Info</VerticalText></InfoTab>
          <LogBox>
            <LogLines><span>Reading Quality Cr</span><span>Overlapping morpl</span><span>Overlapping morpl</span></LogLines>
            <VBar><Icon n="up" s={5} /><Icon n="down" s={5} /></VBar>
            <HBar><Icon n="left" s={5} /><HThumb $w={12} /><Icon n="chev" s={5} /></HBar>
            <Corner><Icon n="expand" s={7} /></Corner>
          </LogBox>
          <ToolRows>
            <ToolRow>
              <ToolGroup $w={163}><Tools list="| select ENT MAC v fan 40 frame v boxes poly >" /></ToolGroup>
              <ToolGroup $w={163}><Tools list="| line plus minus bang tiles dup lock v scatter dup2 >" /></ToolGroup>
              <ToolGroup $w={142}><Tools list="| pid cubeBlue +cubeHole cubeHeat v +cubeMesh cubeRed v cubeGear v >" /></ToolGroup>
            </ToolRow>
            <ToolRow>
              <Block $w={163}><Tools list="| +circle ball +bar gems v beam +disc +v >" /></Block>
              <Block $w={163}><Tools list="| +quad cross +faces +v +quadG +quadR +quadY +v +quadB" /></Block>
              <Block $w={54}><Tools list="| +meshG solidG dotG >" /></Block>
              <Block $w={82}><Tools list="| +pen +dotBox +wave curve >" /></Block>
            </ToolRow>
          </ToolRows>
        </Bottom>
      </Body>
      <Taskbar>
        <Start aria-label="Start"><Icon n="windows" s={9} /></Start>
        <TaskSearch><Icon n="search" s={10} /><TaskInput placeholder="Type here to search" /></TaskSearch>
        <TaskButton aria-label="Cortana"><Icon n="ring" s={10} /></TaskButton>
        <TaskButton aria-label="Task view"><Icon n="taskview" s={10} /></TaskButton>
        <TaskButton aria-label="Files"><Icon n="folder" s={12} /></TaskButton>
        <TaskButton aria-label="Chrome" $bg="#fbb47a" $line="#e8741c"><Icon n="chrome" s={12} /></TaskButton>
        <TaskButton aria-label="Word" $line="#b8a032"><Icon n="word" s={13} /></TaskButton>
        <TaskButton aria-label="Excel"><Icon n="excel" s={13} /></TaskButton>
        <TaskButton aria-label="SolidWorks"><Icon n="solid" s={14} /></TaskButton>
        <TaskButton aria-label="Solver"><Icon n="blade" s={12} /></TaskButton>
        <TaskButton aria-label="Workbench"><Icon n="wb" s={14} /></TaskButton>
        <TaskButton aria-label="Zoom"><Icon n="zoom" s={12} /></TaskButton>
        <TaskButton aria-label="Paint"><Icon n="paint" s={12} /></TaskButton>
        <TaskButton aria-label="Snip"><Icon n="snip" s={12} /></TaskButton>
        <TaskButton aria-label="Terminal" $line="#b8a032"><Icon n="cmd" s={12} /></TaskButton>
        <TaskButton aria-label="ANSA" $bg="#fcf7ee" $line="#b8a032"><Icon n="app" s={13} /></TaskButton>
        <Tray>
          <Icon n="up" s={7} /><Icon n="battery" s={8} /><Icon n="wifi" s={8} /><Icon n="sound" s={10} />
          <Clock>10:12 PM<br />29/09/2020</Clock>
          <Icon n="notice" s={14} />
        </Tray>
      </Taskbar>
    </Page>
  );
}
